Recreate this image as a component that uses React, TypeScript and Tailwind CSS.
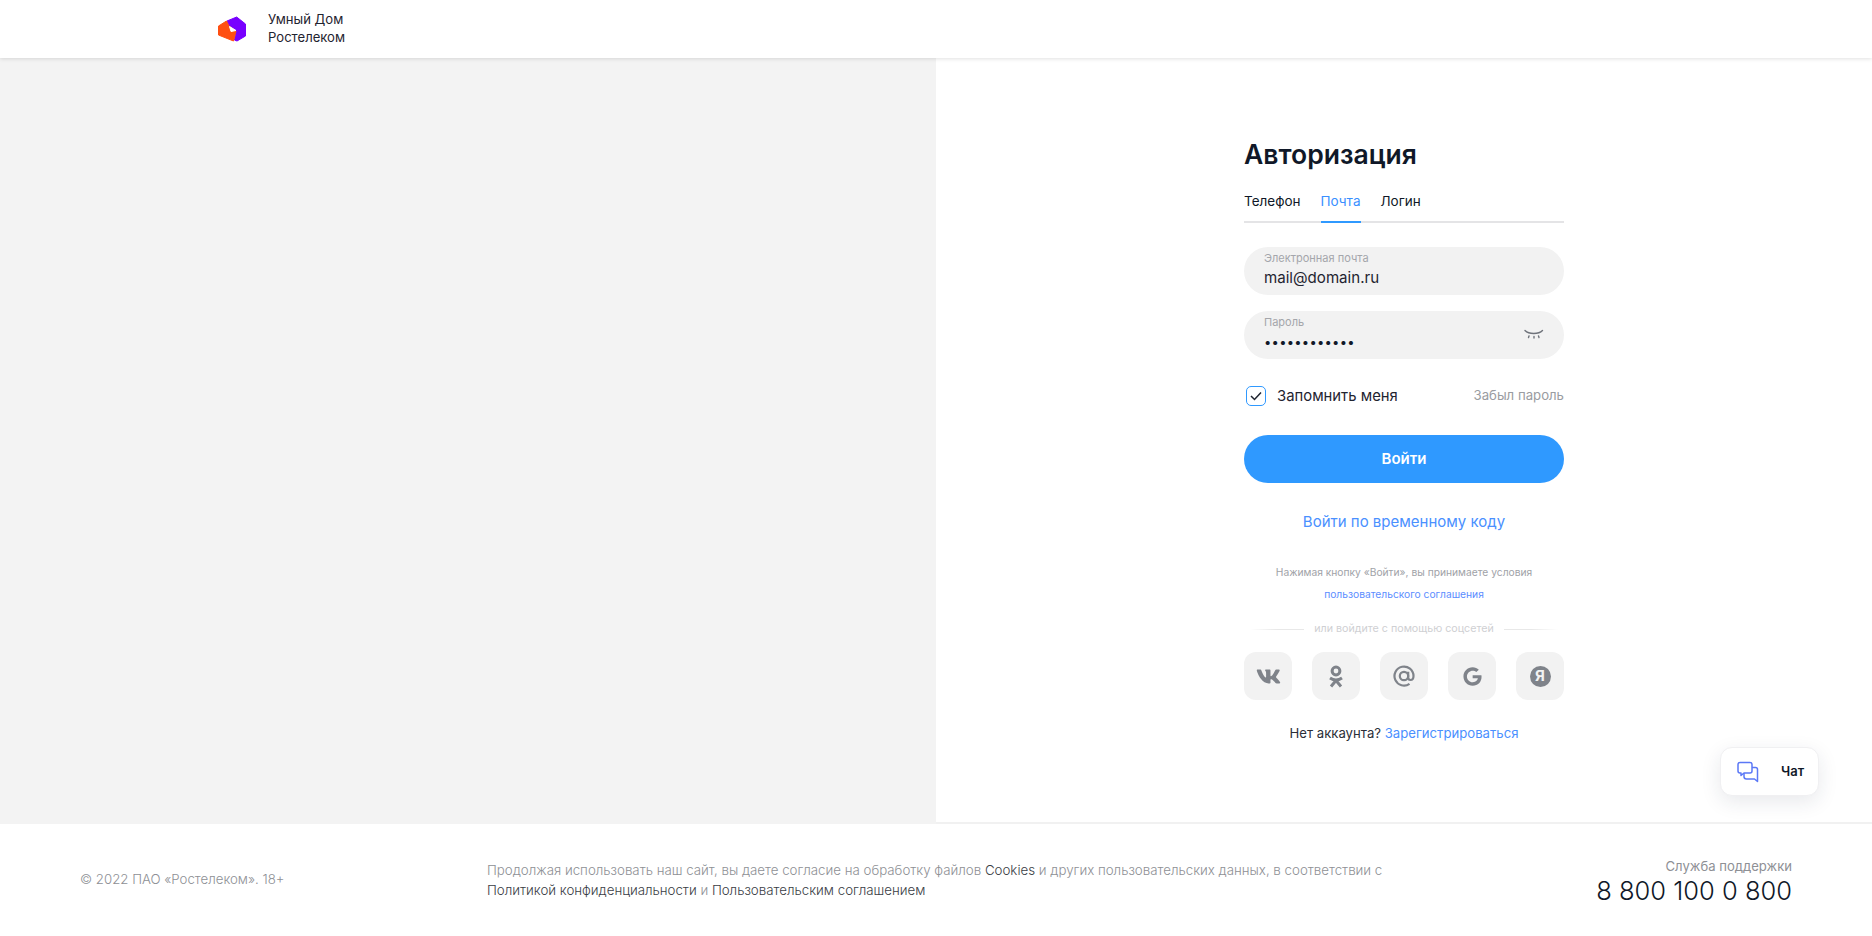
import React from "react";
import { FaVk, FaGoogle } from "react-icons/fa";

const Logo = () => (
  <svg width="30" height="27" viewBox="0 0 30 27" className="block">
    <path d="M9 5 L18.7 1 L27.5 8 L27.5 20 L19 25 L16.5 24 L18 15 L11 10 Z" fill="#7800ff" stroke="#7800ff" strokeLinejoin="round" />
    <path d="M0.5 10 L8.5 5 L11 10 L18 15 L15.5 25 L0.5 19 Z" fill="#ff4f12" stroke="#ff4f12" strokeLinejoin="round" />
    <path d="M11.5 10.5 L18 14.5 L13 15.5 Z" fill="#fff" stroke="#fff" strokeLinejoin="round" />
  </svg>
);

const Eye = () => (
  <svg width="20" height="12" viewBox="0 0 20 12" fill="none" stroke="#6f737b" strokeWidth="1.4" strokeLinecap="round">
    <path d="M1 1.5 C5 5.5 14.5 5.5 18.5 1.5" />
    <path d="M5 7 L4.5 8.5 M10 7.5 V9 M14.5 7 L15 8.5" />
  </svg>
);

const ChatIcon = () => (
  <svg width="22" height="22" viewBox="0 0 22 22" fill="none" stroke="#5b78f6" strokeWidth="1.5" strokeLinejoin="round">
    <path d="M3 1.5 H13 Q15 1.5 15 3.5 V10 Q15 12 13 12 H7 L4 14.5 V12 H3 Q1 12 1 10 V3.5 Q1 1.5 3 1.5 Z" />
    <path d="M15 6.5 H18.5 Q20.5 6.5 20.5 8.5 V20.5 L17.5 18 H9.5 Q7 18 7 15.5 V12" />
  </svg>
);

const Social = ({ children }: { children: React.ReactNode }) => (
  <div className="flex h-12 w-12 items-center justify-center rounded-xl bg-[#f2f2f2] text-[#7f838a]">{children}</div>
);

export default function App() {
  return (
    <div className="relative flex h-[936px] w-full flex-col overflow-hidden bg-white font-['Inter','Noto_Sans',sans-serif] text-[#101828]">
      <header className="z-10 flex h-[58px] shrink-0 items-center bg-white pl-[218px] shadow-[0_1px_4px_rgba(0,0,0,0.12)]">
        <Logo />
        <div className="ml-[20px] pb-[3px] text-[13.1px] leading-[18px] text-[#1f2430]">
          <div>Умный Дом</div>
          <div>Ростелеком</div>
        </div>
      </header>

      <main className="flex h-[766px] shrink-0">
        <div className="w-[936px] bg-[#f3f3f3]" />
        <div className="flex flex-1 justify-center border-b-2 border-[#f1f1f1] pt-[77px]">
          <div className="flex w-[320px] flex-col">
            <h1 className="text-[26.5px] font-semibold leading-[38px] text-[#101828]">Авторизация</h1>

            <div className="mt-[16px] flex h-[34px] gap-[20px] border-b-2 border-[#e4e4e6] text-[13.5px]">
              <div className="h-[34px] pt-[1px] leading-[22px]">Телефон</div>
              <div className="h-[34px] border-b-2 border-[#2f99ff] pt-[1px] leading-[22px] text-[#3a8fff]">Почта</div>
              <div className="h-[34px] pt-[1px] leading-[22px]">Логин</div>
            </div>

            <div className="mt-[24px] flex h-12 flex-col rounded-full bg-[#f2f2f2] px-[20px] pt-[4px]">
              <div className="text-[11px] leading-[14px] text-[#a4a6ab]">Электронная почта</div>
              <div className="mt-[2px] text-[15.1px] leading-[22px] text-[#1f2430]">mail@domain.ru</div>
            </div>

            <div className="mt-[16px] flex h-12 items-center justify-between rounded-full bg-[#f2f2f2] px-[20px]">
              <div className="flex h-full flex-col pt-[4px]">
                <div className="text-[11px] leading-[14px] text-[#a4a6ab]">Пароль</div>
                <div className="mt-[2px] text-[13px] leading-[22px] tracking-[0.25px] text-[#101828]">••••••••••••</div>
              </div>
              <Eye />
            </div>

            <div className="mt-[26px] flex h-[22px] items-center justify-between pl-[2px]">
              <div className="flex items-center gap-[11px]">
                <div className="flex h-[20px] w-[20px] items-center justify-center rounded-[5px] border border-[#2f99ff]">
                  <svg width="12" height="10" viewBox="0 0 12 10" fill="none" stroke="#1f2430" strokeWidth="1.5">
                    <path d="M1 5 L4.5 8.5 L11 1.5" />
                  </svg>
                </div>
                <span className="text-[14.85px] text-[#1f2430]">Запомнить меня</span>
              </div>
              <span className="text-[13.2px] text-[#9a9ca1]">Забыл пароль</span>
            </div>

            <button className="mt-[28px] h-12 rounded-full bg-[#2f99ff] text-[15px] font-semibold text-white">Войти</button>

            <div className="mt-[28px] text-center text-[15px] leading-[22px] text-[#4a90ff]">Войти по временному коду</div>

            <div className="mt-[28px] text-center text-[10.25px] leading-[22px] text-[#a0a2a7]">
              <div>Нажимая кнопку «Войти», вы принимаете условия</div>
              <div className="text-[#5b8dff]">пользовательского соглашения</div>
            </div>

            <div className="mt-[17px] flex h-[14px] items-center gap-[10px] px-[6px] text-[10.7px] text-[#cfd0d3]">
              <div className="h-px flex-1 bg-linear-to-r from-transparent via-[#e8e8e8] to-[#e8e8e8]" />
              <span>или войдите с помощью соцсетей</span>
              <div className="h-px flex-1 bg-linear-to-r from-[#e8e8e8] via-[#e8e8e8] to-transparent" />
            </div>

            <div className="mt-[16px] flex justify-between">
              <Social><FaVk size={25} /></Social>
              <Social>
                <svg width="16" height="23" viewBox="0 0 16 23" fill="none" stroke="currentColor" strokeWidth="3">
                  <circle cx="8" cy="6" r="3.9" />
                  <path d="M2 13 Q8 17 14 13" />
                  <path d="M8 15.5 L3 21.5 M8 15.5 L13 21.5" />
                </svg>
              </Social>
              <Social>
                <svg width="22" height="22" viewBox="0 0 22 22" fill="none" stroke="currentColor" strokeWidth="2.2">
                  <circle cx="11" cy="11" r="4.2" />
                  <path d="M15.2 6.8 V12.5 Q15.2 15 17.5 15 Q20.5 15 20.5 11 A9.5 9.5 0 1 0 16.5 18.8" />
                </svg>
              </Social>
              <Social><FaGoogle size={19} /></Social>
              <Social>
                <div className="flex h-[21px] w-[21px] items-center justify-center rounded-full bg-[#7f838a] text-[15px] font-bold text-[#f2f2f2]">Я</div>
              </Social>
            </div>

            <div className="mt-[24px] text-center text-[13.15px] leading-[18px] text-[#2a2e38]">
              Нет аккаунта? <span className="text-[#4a90ff]">Зарегистрироваться</span>
            </div>
          </div>
        </div>
      </main>

      <footer className="flex flex-1 items-center bg-white pl-[80px] pr-[80px]">
        <div className="w-[407px] shrink-0 text-[13.25px] font-light text-[#8e9095]">© 2022 ПАО «Ростелеком». 18+</div>
        <div className="flex-1 text-[13.3px] font-light leading-[20px] text-[#8e9095]">
          <div>Продолжая использовать наш сайт, вы даете согласие на обработку файлов <span className="text-[#3a3d45]">Cookies</span> и других пользовательских данных, в соответствии с</div>
          <div><span className="text-[#3a3d45]">Политикой конфиденциальности</span> и <span className="text-[#3a3d45]">Пользовательским соглашением</span></div>
        </div>
        <div className="pt-[4px] text-right">
          <div className="text-[13.1px] leading-[18px] text-[#8e9095]">Служба поддержки</div>
          <div className="text-[25.5px] font-light leading-[32px] text-[#101828]">8 800 100 0 800</div>
        </div>
      </footer>

      <div className="absolute left-[1720px] top-[747px] flex h-[49px] w-[99px] items-center rounded-xl border border-[#f0f0f2] bg-white pl-[16px] shadow-[0_6px_20px_rgba(30,40,70,0.1)]">
        <ChatIcon />
        <span className="ml-[22px] text-[13px] font-semibold text-[#101828]">Чат</span>
      </div>
    </div>
  );
}
